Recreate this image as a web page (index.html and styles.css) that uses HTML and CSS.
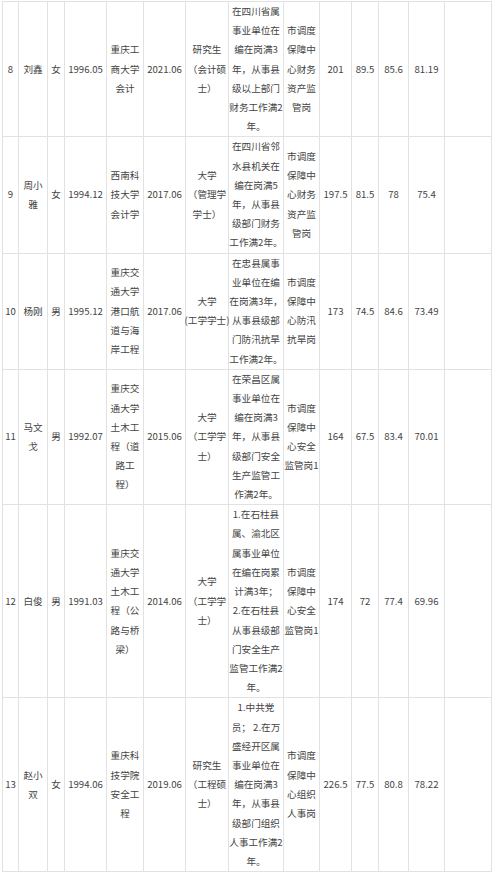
FILE: index.html
```html
<!DOCTYPE html>
<html lang="zh-CN">
<head>
<meta charset="utf-8">
<title>成绩公示</title>
<link rel="stylesheet" href="styles.css">
</head>
<body>
<div class="sheet">
  <!-- 8 -->
  <div class="c">8</div>
  <div class="c">刘鑫</div>
  <div class="c">女</div>
  <div class="c">1996.05</div>
  <div class="c">重庆工<br>商大学<br>会计</div>
  <div class="c">2021.06</div>
  <div class="c">研究生<br>（会计硕<br>士）</div>
  <div class="c">在四川省属<br>事业单位在<br>编在岗满3<br>年，从事县<br>级以上部门<br>财务工作满2<br>年。</div>
  <div class="c">市调度<br>保障中<br>心财务<br>资产监<br>管岗</div>
  <div class="c">201</div>
  <div class="c">89.5</div>
  <div class="c">85.6</div>
  <div class="c">81.19</div>
  <div class="c"></div>
  <!-- 9 -->
  <div class="c">9</div>
  <div class="c">周小<br>雅</div>
  <div class="c">女</div>
  <div class="c">1994.12</div>
  <div class="c">西南科<br>技大学<br>会计学</div>
  <div class="c">2017.06</div>
  <div class="c">大学<br>（管理学<br>学士）</div>
  <div class="c">在四川省邻<br>水县机关在<br>编在岗满5<br>年，从事县<br>级部门财务<br>工作满2年。</div>
  <div class="c">市调度<br>保障中<br>心财务<br>资产监<br>管岗</div>
  <div class="c">197.5</div>
  <div class="c">81.5</div>
  <div class="c">78</div>
  <div class="c">75.4</div>
  <div class="c"></div>
  <!-- 10 -->
  <div class="c">10</div>
  <div class="c">杨刚</div>
  <div class="c">男</div>
  <div class="c">1995.12</div>
  <div class="c">重庆交<br>通大学<br>港口航<br>道与海<br>岸工程</div>
  <div class="c">2017.06</div>
  <div class="c">大学<br>(工学学士)</div>
  <div class="c">在忠县属事<br>业单位在编<br>在岗满3年，<br>从事县级部<br>门防汛抗旱<br>工作满2年。</div>
  <div class="c">市调度<br>保障中<br>心防汛<br>抗旱岗</div>
  <div class="c">173</div>
  <div class="c">74.5</div>
  <div class="c">84.6</div>
  <div class="c">73.49</div>
  <div class="c"></div>
  <!-- 11 -->
  <div class="c">11</div>
  <div class="c">马文<br>戈</div>
  <div class="c">男</div>
  <div class="c">1992.07</div>
  <div class="c">重庆交<br>通大学<br>土木工<br>程（道<br>路工<br>程）</div>
  <div class="c">2015.06</div>
  <div class="c">大学<br>（工学学<br>士）</div>
  <div class="c">在荣昌区属<br>事业单位在<br>编在岗满3<br>年，从事县<br>级部门安全<br>生产监管工<br>作满2年。</div>
  <div class="c">市调度<br>保障中<br>心安全<br>监管岗1</div>
  <div class="c">164</div>
  <div class="c">67.5</div>
  <div class="c">83.4</div>
  <div class="c">70.01</div>
  <div class="c"></div>
  <!-- 12 -->
  <div class="c">12</div>
  <div class="c">白俊</div>
  <div class="c">男</div>
  <div class="c">1991.03</div>
  <div class="c">重庆交<br>通大学<br>土木工<br>程（公<br>路与桥<br>梁）</div>
  <div class="c">2014.06</div>
  <div class="c">大学<br>（工学学<br>士）</div>
  <div class="c">1.在石柱县<br>属、渝北区<br>属事业单位<br>在编在岗累<br>计满3年；<br>2.在石柱县<br>从事县级部<br>门安全生产<br>监管工作满2<br>年。</div>
  <div class="c">市调度<br>保障中<br>心安全<br>监管岗1</div>
  <div class="c">174</div>
  <div class="c">72</div>
  <div class="c">77.4</div>
  <div class="c">69.96</div>
  <div class="c"></div>
  <!-- 13 -->
  <div class="c">13</div>
  <div class="c">赵小<br>双</div>
  <div class="c">女</div>
  <div class="c">1994.06</div>
  <div class="c">重庆科<br>技学院<br>安全工<br>程</div>
  <div class="c">2019.06</div>
  <div class="c">研究生<br>（工程硕<br>士）</div>
  <div class="c">1.中共党<br>员； 2.在万<br>盛经开区属<br>事业单位在<br>编在岗满3<br>年，从事县<br>级部门组织<br>人事工作满2<br>年。</div>
  <div class="c">市调度<br>保障中<br>心组织<br>人事岗</div>
  <div class="c">226.5</div>
  <div class="c">77.5</div>
  <div class="c">80.8</div>
  <div class="c">78.22</div>
  <div class="c"></div>
</div>
</body>
</html>
```

FILE: styles.css
```css
html, body {
  margin: 0;
  padding: 0;
  background: #ffffff;
}

body {
  font-family: "Noto Sans CJK SC", "Noto Sans", sans-serif;
  font-size: 9.6px;
  line-height: 19.2px;
  color: #444444;
}

.sheet {
  display: grid;
  grid-template-columns: 16px 29px 17px 42px 37px 42px 43px 55px 36px 32px 27px 30px 36px 47px;
  width: max-content;
  margin: 1px 0 0 2px;
  border-left: 1px solid #e2e2e2;
  border-top: 1px solid #e2e2e2;
}

.c {
  box-sizing: border-box;
  display: flex;
  align-items: center;
  justify-content: center;
  text-align: center;
  white-space: nowrap;
  border-right: 1px solid #e2e2e2;
  border-bottom: 1px solid #e2e2e2;
  min-height: 20.2px;
}
```
